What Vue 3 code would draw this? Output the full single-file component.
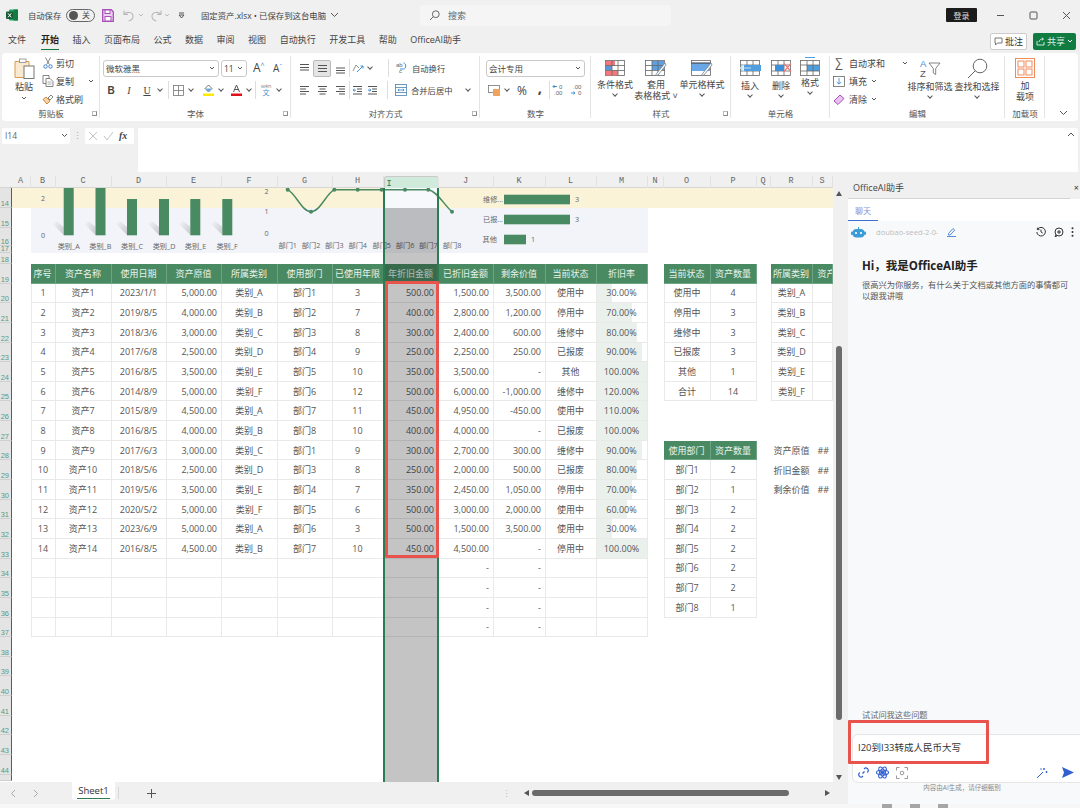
<script setup>
const colNames = ['A','B','C','D','E','F','G','H','I','J','K','L','M','N','O','P','Q','R','S']
const colW = [19,25,56,55,55,56,55,51,55,55,52,51,51,16,47,46,14,42,20]
const gridCols = '11.5px ' + colW.map(w => w + 'px').join(' ')
const rowSizes = [20,20,18,7,11]
for (let i = 19; i <= 44; i++) rowSizes.push(19.65)
rowSizes.push(6)
const gridRows = rowSizes.map(h => h + 'px').join(' ')

const rowLabels = []
for (let r = 14; r <= 45; r++) rowLabels.push(r)

const colOf = n => colNames.indexOf(n) + 2
const rowOf = r => r - 13

const heads = ['序号','资产名称','使用日期','资产原值','所属类别','使用部门','已使用年限','年折旧金额','已折旧金额','剩余价值','当前状态','折旧率']
const rows = [
  ['1','资产1','2023/1/1','5,000.00','类别_A','部门1','3','500.00','1,500.00','3,500.00','使用中',30],
  ['2','资产2','2019/8/5','4,000.00','类别_B','部门2','7','400.00','2,800.00','1,200.00','停用中',70],
  ['3','资产3','2018/3/6','3,000.00','类别_C','部门3','8','300.00','2,400.00','600.00','维修中',80],
  ['4','资产4','2017/6/8','2,500.00','类别_D','部门4','9','250.00','2,250.00','250.00','已报废',90],
  ['5','资产5','2016/8/5','3,500.00','类别_E','部门5','10','350.00','3,500.00','-','其他',100],
  ['6','资产6','2014/8/9','5,000.00','类别_F','部门6','12','500.00','6,000.00','-1,000.00','维修中',120],
  ['7','资产7','2015/8/9','4,500.00','类别_A','部门7','11','450.00','4,950.00','-450.00','使用中',110],
  ['8','资产8','2016/8/5','4,000.00','类别_B','部门8','10','400.00','4,000.00','-','已报废',100],
  ['9','资产9','2017/6/3','3,000.00','类别_C','部门1','9','300.00','2,700.00','300.00','维修中',90],
  ['10','资产10','2018/5/6','2,500.00','类别_D','部门3','8','250.00','2,000.00','500.00','已报废',80],
  ['11','资产11','2019/5/6','3,500.00','类别_E','部门4','7','350.00','2,450.00','1,050.00','停用中',70],
  ['12','资产12','2020/5/2','5,000.00','类别_F','部门5','6','500.00','3,000.00','2,000.00','使用中',60],
  ['13','资产13','2023/6/9','5,000.00','类别_A','部门6','3','500.00','1,500.00','3,500.00','使用中',30],
  ['14','资产14','2016/8/5','4,500.00','类别_B','部门7','10','450.00','4,500.00','-','停用中',100]
]
const rightCols = new Set([3,7,8,9])
const cells = []
const put = (col, row, text, cls = '', bg = '') => cells.push({ col, row, text, cls, bg })

heads.forEach((h, i) => put(i + 3, rowOf(19), h, 'hd' + (i === 0 ? ' first' : '')))
rows.forEach((r, ri) => {
  r.forEach((v, i) => {
    const isRate = i === 11
    put(i + 3, rowOf(20 + ri), isRate ? v.toFixed(2) + '%' : v,
      (rightCols.has(i) ? 'rt' : '') + (i === 0 ? ' first' : '') + (isRate ? ' bar' : ''),
      isRate ? Math.min(v, 100) + '% 100%' : '')
  })
})
for (let r = 34; r <= 37; r++) {
  for (let i = 0; i < 12; i++) {
    const dash = i === 8 || i === 9
    put(i + 3, rowOf(r), dash ? '-' : '', (rightCols.has(i) ? 'rt' : '') + (i === 0 ? ' first' : ''))
  }
}
const pair = (c1, c2, startRow, head, list) => {
  put(c1, startRow, head[0], 'hd first')
  put(c2, startRow, head[1], c2 === colOf('S') ? 'hd lft' : 'hd')
  list.forEach((p, i) => {
    put(c1, startRow + 1 + i, p[0], 'first')
    put(c2, startRow + 1 + i, p[1])
  })
}
pair(colOf('O'), colOf('P'), rowOf(19), ['当前状态','资产数量'], [['使用中',4],['停用中',3],['维修中',3],['已报废',3],['其他',1],['合计',14]])
pair(colOf('R'), colOf('S'), rowOf(19), ['所属类别','资产数量'], [['类别_A',''],['类别_B',''],['类别_C',''],['类别_D',''],['类别_E',''],['类别_F','']])
pair(colOf('O'), colOf('P'), rowOf(28), ['使用部门','资产数量'], [['部门1',2],['部门2',1],['部门3',2],['部门4',2],['部门5',2],['部门6',2],['部门7',2],['部门8',1]])
;['资产原值','折旧金额','剩余价值'].forEach((t, i) => {
  put(colOf('R'), rowOf(28 + i), t, 'plain')
  put(colOf('S'), rowOf(28 + i), '##', 'plain lft')
})

const cellStyle = c => {
  const s = { gridColumn: c.col, gridRow: c.row }
  if (c.bg) s.backgroundSize = c.bg
  return s
}
const barItems = [
  { x: 63.7, t: -8 }, { x: 95.5, t: -8 }, { x: 127, t: 11 }, { x: 159, t: 11 }, { x: 190.3, t: 11 }, { x: 222.3, t: 11 }
]
const barLabels = [['类别_A',68.7],['类别_B',100.3],['类别_C',132],['类别_D',164],['类别_E',195.5],['类别_F',227]]
const linePts = [[287.7,1.7],[311,23.7],[334.3,1.7],[357.7,1.7],[381.7,1.7],[405,1.7],[428.3,1.7],[452,23.7]]
const tabs = ['开始','插入','页面布局','公式','数据','审阅','视图','自动执行','开发工具','帮助','OfficeAI助手']
</script>

<template>
  <div class="app">
    <!-- title bar -->
    <header class="titlebar">
      <div class="tl">
        <svg class="logo" width="12" height="12" viewBox="0 0 12 12"><rect x="3" y="0.5" width="9" height="11" rx="1" fill="#21a366"/><rect x="7.5" y="0.5" width="4.5" height="11" fill="#107c41"/><rect x="0" y="2.5" width="7.5" height="7.5" rx="1" fill="#185c37"/><path d="M2 4.3l3.3 4M5.3 4.3L2 8.3" stroke="#fff" stroke-width="1"/></svg>
        <span class="as">自动保存</span>
        <span class="toggle"><i class="knob"></i><b>关</b></span>
        <svg class="save" width="12" height="13" viewBox="0 0 12 13"><path d="M.7.7h8.6l2 2v9.6H.7z" fill="#ecd4f0" stroke="#a84fb8" stroke-width="1.3"/><rect x="3" y="1" width="5" height="3.5" fill="#fff" stroke="#a84fb8"/><rect x="3" y="7.5" width="6" height="4.5" fill="#fff" stroke="#a84fb8"/></svg>
        <svg class="undo" width="11" height="13" viewBox="0 0 11 13" fill="none" stroke="#b8b8b8" stroke-width="1.1"><path d="M1 1.5v4h4"/><path d="M1.2 5.3C3.5 2.4 9.8 2.8 10 7c.1 2.6-2 4.4-4.3 5"/></svg>
        <svg class="cv1" width="6" height="4" viewBox="0 0 6 4"><path d="M1 1l2 2 2-2" fill="none" stroke="#bbb"/></svg>
        <svg class="redo" width="12" height="13" viewBox="0 0 12 13" fill="none" stroke="#b8b8b8" stroke-width="1.1"><path d="M11 1.5v4H7"/><path d="M10.8 5.3C8.5 2.4 2.2 2.8 2 7c-.1 2.6 2 4.4 4.3 5"/></svg>
        <svg class="cv2" width="6" height="4" viewBox="0 0 6 4"><path d="M1 1l2 2 2-2" fill="none" stroke="#bbb"/></svg>
        <svg class="cust" width="7" height="7" viewBox="0 0 7 7"><path d="M1 1h5" stroke="#555"/><path d="M1 3l2.5 3L6 3z" fill="none" stroke="#555"/></svg>
        <span class="fname">固定资产.xlsx • 已保存到这台电脑</span>
        <svg class="cv3" width="9" height="6" viewBox="0 0 9 6"><path d="M1 1l3.5 3.5L8 1" fill="none" stroke="#555"/></svg>
      </div>
      <div class="search">
        <svg width="11" height="11" viewBox="0 0 11 11" fill="none" stroke="#666"><circle cx="6.8" cy="4.2" r="3.4"/><path d="M4.4 6.6L1 10"/></svg>
        <span>搜索</span>
      </div>
      <div class="grow"></div>
      <span class="login">登录</span>
      <span class="winbtn"><svg width="9" height="9" viewBox="0 0 9 9"><path d="M1 4.5h7" stroke="#555"/></svg></span>
      <span class="winbtn"><svg width="9" height="9" viewBox="0 0 9 9"><rect x="1" y="1" width="7" height="7" rx="1" fill="none" stroke="#555"/></svg></span>
      <span class="winbtn"><svg width="9" height="9" viewBox="0 0 9 9"><path d="M1 1l7 7M8 1L1 8" stroke="#555"/></svg></span>
    </header>

    <!-- tabs -->
    <nav class="tabs">
      <span class="tab first-tab">文件</span>
      <span v-for="t in tabs" :key="t" class="tab" :class="{ active: t === '开始' }">{{ t }}</span>
      <div class="grow"></div>
      <span class="note"><svg width="9" height="9" viewBox="0 0 9 9"><path d="M1 1h7v5H3.5L1.5 8V6H1z" fill="none" stroke="#555" stroke-width=".8"/></svg>批注</span>
      <span class="share"><svg width="9" height="9" viewBox="0 0 9 9" fill="none" stroke="#fff" stroke-width=".8"><path d="M1 4v4h7V5"/><path d="M3 5c0-2 2-3 4-3M5.8.8L7.5 2 5.8 3.4"/></svg>共享<svg width="6" height="4" viewBox="0 0 6 4"><path d="M1 1l2 2 2-2" fill="none" stroke="#fff"/></svg></span>
    </nav>

    <!-- ribbon -->
    <section class="ribbon">
      <div class="grp g1">
        <div class="body row">
          <div class="paste">
            <svg width="21" height="21" viewBox="0 0 21 21"><path d="M1 3.5h4l1-2h5l1 2h3v16H1z" fill="#f9e9d0" stroke="#d89a50"/><rect x="5.5" y="1" width="6.5" height="3.5" fill="#fff" stroke="#8a8a8a" stroke-width=".8"/><rect x="10" y="8" width="10" height="12.5" fill="#fff" stroke="#777"/></svg>
            <span class="lbl">粘贴</span>
            <svg class="cv" width="6" height="4" viewBox="0 0 6 4"><path d="M1 1l2 2 2-2" fill="none" stroke="#555"/></svg>
          </div>
          <div class="list">
            <div class="li"><svg class="m1ic" width="10" height="12" viewBox="0 0 10 12" fill="none" stroke="#3f7fc4"><path d="M2.5 0.5L6.3 7.5M7.5 0.5L3.7 7.5" stroke="#666" stroke-width=".8"/><circle cx="2.5" cy="9.5" r="1.7"/><circle cx="7.5" cy="9.5" r="1.7"/></svg><span>剪切</span></div>
            <div class="li"><svg width="12" height="12" viewBox="0 0 11 12" fill="#fff" stroke="#666" stroke-width=".8"><path d="M.5.5h6v8h-6z"/><path d="M3.5 3.5h4l3 3v5h-7z"/><path d="M5 7h4M5 9h4" stroke="#999"/></svg><span>复制</span><svg class="cv cpy" width="6" height="4" viewBox="0 0 6 4"><path d="M1 1l2 2 2-2" fill="none" stroke="#555"/></svg></div>
            <div class="li"><svg width="12" height="12" viewBox="0 0 12 12"><path d="M1 6.5l4 4.5 3-3-4-4z" fill="#f6d6a8" stroke="#d8853c"/><path d="M6 5l3-3 2 2-3 3z" fill="#fff" stroke="#666" stroke-width=".8"/></svg><span>格式刷</span></div>
          </div>
        </div>
        <div class="glabel">剪贴板<i class="launch"></i></div>
      </div>

      <div class="grp g2">
        <div class="body col">
          <div class="frow r1">
            <span class="sel w116"><span>微软雅黑</span><svg width="6" height="4" viewBox="0 0 6 4"><path d="M1 1l2 2 2-2" fill="none" stroke="#555"/></svg></span>
            <span class="sel w26"><span>11</span><svg width="6" height="4" viewBox="0 0 6 4"><path d="M1 1l2 2 2-2" fill="none" stroke="#555"/></svg></span>
            <span class="a-big">A<sup>^</sup></span>
            <span class="a-small">A<sup>ˇ</sup></span>
          </div>
          <div class="frow r2 f2">
            <b class="ic18 ser">B</b><i class="ic18 ser">I</i><u class="ic18 ser">U</u><span class="cvb"></span>
            <span class="sep m1"></span>
            <span class="ic18"><svg width="11" height="11" viewBox="0 0 11 11" fill="none" stroke="#777" stroke-width=".8"><rect x=".5" y=".5" width="10" height="10"/><path d="M5.5.5v10M.5 5.5h10"/></svg></span><span class="cvb"></span>
            <span class="ic18 ml4"><svg width="11" height="12" viewBox="0 0 11 12"><path d="M5.5 1L9 4.5 5.5 8 2 4.5z" fill="#fff" stroke="#555" stroke-width=".8"/><path d="M2 4.5h7L5.5 8z" fill="#6ea9dc"/><rect y="9.5" width="11" height="2.5" fill="#ffeb00"/></svg></span><span class="cvb"></span>
            <span class="ic18 ml2"><svg width="11" height="12" viewBox="0 0 11 12"><path d="M2.5 8L5.5 1l3 7M3.7 5.5h3.6" fill="none" stroke="#555"/><rect y="9.5" width="11" height="2.5" fill="#e0101a"/></svg></span><span class="cvb"></span>
            <span class="sep m2"></span>
            <span class="ic18 wen"><small>wén</small><em>文</em></span><span class="cvb"></span>
          </div>
        </div>
        <div class="glabel">字体<i class="launch"></i></div>
      </div>

      <div class="grp g3">
        <div class="body col">
          <div class="frow r1 rw">
            <span class="ic18"><svg width="11" height="11" viewBox="0 0 11 11" stroke="#555"><path d="M1 1.5h9M1 4.5h9M1 7h9"/></svg></span>
            <span class="ic18 on"><svg width="11" height="11" viewBox="0 0 11 11" stroke="#555"><path d="M1 2.5h9M1 5.5h9M1 8.5h9"/></svg></span>
            <span class="ic18"><svg width="11" height="11" viewBox="0 0 11 11" stroke="#555"><path d="M1 5h9M1 7.5h9M1 10h9"/></svg></span>
            <span class="sep"></span>
            <span class="ic16"><svg width="12" height="11" viewBox="0 0 12 11" fill="none"><path d="M1 8l3-6 3 3" stroke="#777" stroke-width=".8"/><path d="M5 9l6-6M8.5 3H11v2.5" stroke="#3f8fd0"/></svg></span><span class="cvb"></span>
            <span class="sep m3"></span>
            <span class="wrapico"><svg width="11" height="12" viewBox="0 0 11 12"><text x="0" y="5" class="tinyt">ab</text><text x="3" y="11" class="tinyt">c</text><path d="M7.5 1c3 0 3 6 0 6H4" fill="none" stroke="#3f8fd0"/></svg></span><span class="wtxt">自动换行</span>
          </div>
          <div class="frow r2 rw">
            <span class="ic18"><svg width="11" height="11" viewBox="0 0 11 11" stroke="#555"><path d="M1 1.5h9M1 4h6M1 6.5h9M1 9h6"/></svg></span>
            <span class="ic18"><svg width="11" height="11" viewBox="0 0 11 11" stroke="#555"><path d="M1 1.5h9M2.5 4h6M1 6.5h9M2.5 9h6"/></svg></span>
            <span class="ic18"><svg width="11" height="11" viewBox="0 0 11 11" stroke="#555"><path d="M1 1.5h9M4 4h6M1 6.5h9M4 9h6"/></svg></span>
            <span class="sep"></span>
            <span class="ic15"><svg width="11" height="11" viewBox="0 0 11 11" stroke="#555"><path d="M1 1.5h9M5 4h5M5 6.5h5M1 9h9"/><path d="M4 5.2H1M2.5 3.8L1 5.2l1.5 1.4" stroke="#3f8fd0" fill="none"/></svg></span>
            <span class="ic15"><svg width="11" height="11" viewBox="0 0 11 11" stroke="#555"><path d="M1 1.5h9M5 4h5M5 6.5h5M1 9h9"/><path d="M1 5.2h3M2.5 3.8L4 5.2 2.5 6.6" stroke="#3f8fd0" fill="none"/></svg></span>
            <span class="sep m4"></span>
            <span class="wrapico"><svg width="12" height="12" viewBox="0 0 12 12" fill="#fff" stroke="#4a7fb0" stroke-width=".8"><rect x=".5" y=".5" width="11" height="11"/><path d="M.5 3.5h11M.5 8.5h11"/><path d="M3 6h6M4 4.8L3 6l1 1.2M8 4.8L9 6 8 7.2" stroke="#2f7fc8"/></svg></span><span class="wtxt">合并后居中</span><span class="cvb mc"></span>
          </div>
        </div>
        <div class="glabel">对齐方式<i class="launch"></i></div>
      </div>

      <div class="grp g4">
        <div class="body col">
          <div class="frow r1 pl6"><span class="sel w99"><span>会计专用</span><svg width="6" height="4" viewBox="0 0 6 4"><path d="M1 1l2 2 2-2" fill="none" stroke="#555"/></svg></span></div>
          <div class="frow r2 pl5">
            <span class="ic18"><svg width="12" height="11" viewBox="0 0 12 11"><rect x=".5" y=".5" width="11" height="7" fill="#fff" stroke="#777" stroke-width=".8"/><rect x="5" y="4" width="7" height="7" fill="#f0a35e"/></svg></span><span class="cvb"></span>
            <span class="ic18 ml2 pct">%</span><span class="ic18 comma">,</span>
            <span class="sep"></span>
            <span class="dec"><svg width="14" height="12" viewBox="0 0 14 12"><path d="M5 2.5H1M2.5 1L1 2.5 2.5 4" stroke="#3f8fd0" fill="none"/><text x="7" y="5" class="tinyt">0</text><text x="2" y="11" class="tinyt">.00</text></svg></span>
            <span class="dec"><svg width="14" height="12" viewBox="0 0 14 12"><text x="3" y="5" class="tinyt">.00</text><path d="M1 9h4M3.5 7.5L5 9 3.5 10.5" stroke="#3f8fd0" fill="none"/><text x="8" y="11" class="tinyt">0</text></svg></span>
          </div>
        </div>
        <div class="glabel">数字</div>
      </div>

      <div class="grp g5">
        <div class="body row">
          <div class="big w48">
            <svg width="20" height="16" viewBox="0 0 20 16"><rect x=".5" y=".5" width="19" height="15" fill="#fff" stroke="#666" stroke-width=".8"/><rect x="1" y="1" width="9" height="5" fill="#f4777b"/><rect x="1" y="6" width="6" height="4" fill="#5d97d8"/><rect x="1" y="10.5" width="12" height="5" fill="#f4777b"/><path d="M7 .5v15M13 .5v15M.5 5.5h19M.5 10.5h19" stroke="#666" stroke-width=".8" fill="none"/></svg>
            <span class="l1 fst">条件格式</span><span class="cvb2"></span>
          </div>
          <div class="big w34">
            <svg width="22" height="16" viewBox="0 0 22 16"><rect x=".5" y=".5" width="19" height="15" fill="#fff" stroke="#666" stroke-width=".8"/><path d="M7 1h12v9H7z" fill="#5d9fe0"/><path d="M7 .5v15M13 .5v15M.5 5.5h19M.5 10.5h19" stroke="#666" stroke-width=".8" fill="none"/><path d="M20 3L12 13l-2 3 3-1 8-10z" fill="#fff" stroke="#6d7f8f" stroke-width=".8"/></svg>
            <span class="l1 fst">套用</span><span class="l1">表格格式 ˅</span>
          </div>
          <div class="big w58">
            <svg width="22" height="16" viewBox="0 0 22 16"><rect x=".5" y=".5" width="19" height="15" fill="#fff" stroke="#666" stroke-width=".8"/><rect x="1" y="3" width="18" height="8" fill="#6aa7e6"/><path d="M.5 3h19" stroke="#333"/><path d="M20 3L12 13l-2 3 3-1 8-10z" fill="#fff" stroke="#6d7f8f" stroke-width=".8"/></svg>
            <span class="l1 fst">单元格样式</span><span class="cvb2"></span>
          </div>
        </div>
        <div class="glabel">样式<i class="launch"></i></div>
      </div>

      <div class="grp g6">
        <div class="body row">
          <div class="big w38">
            <svg width="22" height="16" viewBox="0 0 22 16"><rect x="1.5" y=".5" width="19" height="15" fill="#fff" stroke="#666" stroke-width=".8"/><path d="M8 .5v15M14 .5v15M1.5 5h19M1.5 11h19" stroke="#666" stroke-width=".8"/><rect x="5" y="5" width="17" height="6" fill="#4f9fe0"/><path d="M12 8H2M5 4.5L1.5 8 5 11.5" fill="none" stroke="#bfe0f8" stroke-width="1.2"/></svg>
            <span class="l1 lo">插入</span><span class="cvb2"></span>
          </div>
          <div class="big w24">
            <svg width="21" height="16" viewBox="0 0 21 16"><rect x=".5" y=".5" width="19" height="15" fill="#fff" stroke="#666" stroke-width=".8"/><path d="M7 .5v15M13 .5v15M.5 5h19M.5 11h19" stroke="#666" stroke-width=".8"/><rect x="4" y="5" width="9" height="6" fill="#3f8fd8"/><path d="M13 3.5l7 8M20 3.5l-7 8" stroke="#ef7a7c" stroke-width="1.2"/></svg>
            <span class="l1 lo">删除</span><span class="cvb2"></span>
          </div>
          <div class="big w34">
            <svg width="20" height="19" viewBox="0 0 20 19" class="up"><path d="M5 .5h10" stroke="#4f9fe0"/><rect x=".5" y="3.5" width="19" height="15" fill="#fff" stroke="#666" stroke-width=".8"/><rect x="7" y="8" width="12" height="6" fill="#4f9fe0"/><path d="M7 3.5v15M13 3.5v15M.5 8h19M.5 14h19" stroke="#666" stroke-width=".8" fill="none"/></svg>
            <span class="l1 lo">格式</span><span class="cvb2"></span>
          </div>
        </div>
        <div class="glabel">单元格</div>
      </div>

      <div class="grp g7">
        <div class="body row">
          <div class="list w80">
            <div class="li"><span class="sig">∑</span><span>自动求和</span><svg class="cv cpy2" width="6" height="4" viewBox="0 0 6 4"><path d="M1 1l2 2 2-2" fill="none" stroke="#555"/></svg></div>
            <div class="li"><svg width="12" height="11" viewBox="0 0 12 11" fill="#fff" stroke="#666" stroke-width=".8"><rect x=".5" y=".5" width="11" height="10"/><path d="M6 2v6M3.8 6L6 8.2 8.2 6" stroke="#2f7fc8" fill="none"/></svg><span>填充</span><svg width="6" height="4" viewBox="0 0 6 4"><path d="M1 1l2 2 2-2" fill="none" stroke="#555"/></svg></div>
            <div class="li"><svg width="12" height="11" viewBox="0 0 12 11"><path d="M1 7l6-6 4 3.5-6 6z" fill="#e9c3ef" stroke="#a84fb8"/></svg><span>清除</span><svg width="6" height="4" viewBox="0 0 6 4"><path d="M1 1l2 2 2-2" fill="none" stroke="#555"/></svg></div>
          </div>
          <div class="big w40">
            <svg class="up2" width="22" height="21" viewBox="0 0 22 21"><text x="1" y="9" class="azA">A</text><text x="1" y="19" class="azZ">Z</text><path d="M10 5h11l-4.3 5.5v6l-2.4-1.5v-4.5z" fill="#fff" stroke="#666" stroke-width=".8"/></svg>
            <span class="l1 l3">排序和筛选</span><span class="cvb2"></span>
          </div>
          <div class="big w54">
            <svg class="up2" width="21" height="21" viewBox="0 0 21 21" fill="none" stroke="#666"><circle cx="13" cy="8" r="6.8"/><path d="M8 13l-7 7"/></svg>
            <span class="l1 l3">查找和选择</span><span class="cvb2"></span>
          </div>
        </div>
        <div class="glabel">编辑</div>
      </div>

      <div class="grp g8">
        <div class="body row">
          <div class="big w40">
            <svg class="up2" width="20" height="20" viewBox="0 0 20 20" fill="none" stroke="#f08a5c"><rect x=".5" y=".5" width="19" height="19"/><rect x="3" y="3" width="6" height="6"/><rect x="11" y="3" width="6" height="6"/><rect x="3" y="11" width="6" height="6"/><rect x="11" y="11" width="6" height="6"/></svg>
            <span class="l1 l3">加</span><span class="l1">载项</span>
          </div>
        </div>
        <div class="glabel">加载项</div>
      </div>
      <div class="collapse"><svg width="9" height="6" viewBox="0 0 9 6"><path d="M1 1l3.5 3.5L8 1" fill="none" stroke="#555"/></svg></div>
    </section>

    <!-- formula bar -->
    <section class="formula">
      <div class="namebox"><span>I14</span><svg width="7" height="5" viewBox="0 0 7 5"><path d="M1 1l2.500 2.500L6 1" fill="none" stroke="#555"/></svg></div>
      <span class="vdots">⋮</span>
      <div class="fxbox">
        <svg width="10" height="10" viewBox="0 0 10 10"><path d="M1 1l8 8M9 1L1 9" stroke="#c4c4c4"/></svg>
        <svg width="11" height="10" viewBox="0 0 11 10"><path d="M1 5l3 4 6-8" fill="none" stroke="#c4c4c4"/></svg>
        <span class="fx">fx</span>
      </div>
      <div class="finput"><svg width="8" height="5" viewBox="0 0 8 5"><path d="M1 4l3-3 3 3" fill="none" stroke="#555"/></svg></div>
    </section>

    <!-- workspace -->
    <div class="work">
      <div class="left">
        <div class="colhead" :style="{ gridTemplateColumns: gridCols }">
          <span class="corner"><i></i></span>
          <span v-for="n in colNames" :key="n" class="ch" :class="{ sel: n === 'I' }">{{ n }}</span>
        </div>
        <div class="mid">
          <div class="sheet">
            <div class="grid" :style="{ gridTemplateColumns: gridCols, gridTemplateRows: gridRows }">
              <span v-for="r in rowLabels" :key="r" class="rh" :style="{ gridRow: r - 13 }">{{ r < 45 ? r : '' }}</span>
              <div class="band"></div>
              <div class="band-i"></div>
              <div class="chartbg"></div>
              <div v-for="(c, i) in cells" :key="i" class="cell" :class="c.cls" :style="cellStyle(c)">{{ c.text }}</div>
            </div>

            <svg class="charts" width="832" height="76" viewBox="0 0 832 76">
              <defs>
                <linearGradient id="shd" x1="1" y1="1" x2="0" y2="0"><stop offset="0" stop-color="#c6cacd"/><stop offset="1" stop-color="#c6cacd" stop-opacity="0"/></linearGradient>
              </defs>
              <text x="43" y="13" class="ax" text-anchor="middle">2</text>
              <text x="43" y="50" class="ax" text-anchor="middle">0</text>
              <g v-for="b in barItems" :key="b.x">
                <path :d="`M${b.x} 47L${b.x - 11} 36L${b.x - 7} 33L${b.x} 39z`" fill="url(#shd)"/>
                <rect :x="b.x" :y="b.t" width="10" :height="47.3 - b.t" fill="#4a8a62"/>
              </g>
              <text v-for="l in barLabels" :key="l[0]" :x="l[1]" y="61" class="ax" text-anchor="middle">{{ l[0] }}</text>
              <text x="266.5" y="6" class="ax" text-anchor="middle">2</text>
              <text x="266.5" y="26" class="ax" text-anchor="middle">1</text>
              <text x="266.5" y="48" class="ax" text-anchor="middle">0</text>
              <path d="M287.7 1.7C296 6 302 23.7 311 23.7S326 6 334.3 1.7L357.7 1.7 381.7 1.7 405 1.7 428.3 1.7C437 3 444 17 452 23.7" fill="none" stroke="#4a8a62" stroke-width="1.5"/>
              <circle v-for="p in linePts" :key="p[0]" :cx="p[0]" :cy="p[1]" r="2" fill="#4a8a62"/>
              <text v-for="(p, i) in linePts" :key="'d' + i" :x="p[0]" y="60" class="ax" text-anchor="middle">部门{{ i + 1 }}</text>
              <text x="503" y="14" class="ax" text-anchor="end">维修...</text>
              <rect x="504" y="6.7" width="66" height="9.6" fill="#4a8a62"/>
              <text x="577" y="14" class="ax" text-anchor="middle">3</text>
              <text x="503" y="34" class="ax" text-anchor="end">已报...</text>
              <rect x="504" y="26.7" width="66" height="9.6" fill="#4a8a62"/>
              <text x="577" y="34" class="ax" text-anchor="middle">3</text>
              <text x="497" y="54" class="ax" text-anchor="end">其他</text>
              <rect x="504" y="46.7" width="22" height="9.6" fill="#4a8a62"/>
              <text x="533" y="54" class="ax" text-anchor="middle">1</text>
            </svg>

            <div class="selcol"></div>
            <div class="redbox"></div>
          </div>
          <div class="vscroll">
            <i class="arr-up"></i>
            <div class="vtrack"><i class="vthumb"></i></div>
            <i class="arr-down"></i>
          </div>
        </div>
        <div class="sheetbar">
          <svg class="nav1" width="6" height="9" viewBox="0 0 6 9"><path d="M5 1L1.5 4.5 5 8" fill="none" stroke="#aaa"/></svg>
          <svg class="nav2" width="6" height="9" viewBox="0 0 6 9"><path d="M1 1l3.5 3.5L1 8" fill="none" stroke="#aaa"/></svg>
          <span class="stab">Sheet1</span>
          <i class="stabsep"></i>
          <svg class="plus" width="9" height="9" viewBox="0 0 9 9"><path d="M4.5 0v9M0 4.5h9" stroke="#555"/></svg>
          <div class="grow"></div>
          <span class="hdots">⋮</span>
          <i class="arr-left"></i>
          <i class="hthumb"></i>
          <i class="arr-right"></i>
        </div>
      </div>

      <aside class="panel">
        <div class="phead"><span>OfficeAI助手</span><b>×</b></div>
        <div class="ptabs"><span>聊天</span></div>
        <div class="pbody">
          <div class="ptools">
            <svg width="15" height="11" viewBox="0 0 15 11"><path d="M7.5 0v2" stroke="#3a9bd9"/><rect x="1.5" y="2" width="12" height="8.5" rx="4" fill="#3a9bd9"/><rect x="0" y="4.5" width="2" height="3.5" rx="1" fill="#3a9bd9"/><rect x="13" y="4.5" width="2" height="3.5" rx="1" fill="#3a9bd9"/><circle cx="5" cy="6" r="1.1" fill="#fff"/><circle cx="10" cy="6" r="1.1" fill="#fff"/></svg>
            <span class="model">doubao-seed-2-0-l</span>
            <svg class="edit" width="9" height="10" viewBox="0 0 9 10" fill="none" stroke="#3f7fd6" stroke-width=".9"><path d="M1.5 6.5L6 1.5l1.7 1.5L3.2 8H1.5z"/><path d="M0 9.5h9"/></svg>
            <div class="grow"></div>
            <svg width="10" height="10" viewBox="0 0 10 10" fill="none" stroke="#333"><path d="M1.6 2.2A4.3 4.3 0 1 1 .8 5"/><path d="M1.4.6v2h2M5 2.6V5l1.7 1"/></svg>
            <svg class="pl" width="10" height="10" viewBox="0 0 10 10" fill="none" stroke="#333"><circle cx="5" cy="5" r="4"/><path d="M5 3v4M3 5h4"/><path d="M2 8L1 9.6l2-.6"/></svg>
            <svg class="dts" width="3" height="10" viewBox="0 0 3 10" fill="#333"><circle cx="1.5" cy="1.2" r="1"/><circle cx="1.5" cy="5" r="1"/><circle cx="1.5" cy="8.8" r="1"/></svg>
          </div>
          <h2 class="hi">Hi，我是OfficeAI助手</h2>
          <p class="desc">很高兴为你服务，有什么关于文档或其他方面的事情都可以跟我讲哦</p>
          <div class="grow"></div>
          <div class="try">试试问我这些问题</div>
          <div class="inputbox">
            <div class="itext">I20到I33转成人民币大写</div>
            <div class="iicons">
              <svg width="13" height="13" viewBox="0 0 13 13" fill="none" stroke="#2f5fd0" stroke-width="1.2"><path d="M5.5 7.5l2-2"/><path d="M7 3l1-1a2.6 2.6 0 0 1 3.2 3.2l-1 1.3"/><path d="M6 10l-1 1a2.6 2.6 0 0 1-3.2-3.2l1-1.3"/></svg>
              <svg class="ii2" width="13" height="13" viewBox="0 0 13 13" fill="none" stroke="#2f5fd0" stroke-width="1.1"><ellipse cx="6.5" cy="6.5" rx="6" ry="2.5"/><ellipse cx="6.5" cy="6.5" rx="6" ry="2.5" transform="rotate(60 6.5 6.5)"/><ellipse cx="6.5" cy="6.5" rx="6" ry="2.5" transform="rotate(120 6.5 6.5)"/><circle cx="6.5" cy="6.5" r="1.2" fill="#2f5fd0"/></svg>
              <svg class="ii3" width="12" height="12" viewBox="0 0 12 12" fill="none" stroke="#999"><path d="M.5 3.5v-3h3M8.5.5h3v3M11.5 8.5v3h-3M3.5 11.5h-3v-3"/><circle cx="6" cy="6" r="1.8"/></svg>
              <div class="grow"></div>
              <svg width="12" height="12" viewBox="0 0 12 12" fill="none" stroke="#2f5fd0"><path d="M1 11l6-6"/><path d="M8 1v2M7 2h2M10.5 4v2M9.5 5h2M5 1.5v1M4.5 2h1" stroke-width=".9"/></svg>
              <svg class="ii5" width="12" height="11" viewBox="0 0 12 11"><path d="M0 0l12 5.5-12 5.500 2-5.500z" fill="#2f5fd0"/></svg>
            </div>
          </div>
          <div class="disc">内容由AI生成，请仔细甄别</div>
          <div class="redbox2"></div>
        </div>
      </aside>
    </div>
    <footer class="status"><i></i><i></i><i></i></footer>
  </div>
</template>

<style scoped>
* { box-sizing: border-box; }
.app { width: 1080px; height: 808px; overflow: hidden; background: #f0f0f0; display: flex; flex-direction: column; position: relative; color: #444; font-family: "Open Sans", "Noto Sans CJK SC", "Liberation Sans", sans-serif; font-size: 9px; }
.grow { flex: 1 1 0; }

.titlebar { height: 30px; display: flex; align-items: center; flex: none; }
.tl { width: 420px; display: flex; align-items: center; flex: none; }
.logo { margin-left: 6px; }
.as { margin-left: 10px; font-size: 8.3px; width: 33px; white-space: nowrap; }
.toggle { margin-left: 5px; width: 29px; height: 13px; border: 1px solid #666; border-radius: 7px; display: flex; align-items: center; padding: 0 2px; justify-content: space-between; }
.toggle .knob { width: 9px; height: 9px; border-radius: 50%; background: #555; }
.toggle b { font-weight: 400; font-size: 8px; margin-right: 2px; line-height: 1; }
.save { margin-left: 7px; }
.undo { margin-left: 9px; }
.cv1 { margin-left: 4px; }
.redo { margin-left: 6px; }
.cv2 { margin-left: 2px; }
.cust { margin-left: 8px; }
.fname { margin-left: 16px; font-size: 8.4px; white-space: nowrap; width: 127px; }
.cv3 { margin-left: 2px; }
.search { width: 251px; height: 21px; flex: none; background: #f5f5f5; border-radius: 3px; display: flex; align-items: center; padding-left: 9px; gap: 8px; color: #666; font-size: 9px; }
.login { width: 31px; height: 14px; background: #1c1c1c; color: #ddd; border-radius: 1px; font-size: 8px; display: flex; align-items: center; justify-content: center; margin-right: 7px; }
.winbtn { width: 33px; display: flex; justify-content: center; }
.winbtn:last-of-type { margin-right: -3px; }

.tabs { height: 22.5px; flex: none; display: flex; align-items: center; padding: 0 4px 3px 8px; gap: 13.5px; }
.tab { white-space: nowrap; position: relative; font-size: 9px; color: #444; }
.first-tab { margin-right: 1.5px; }
.tab.active { font-weight: 700; color: #222; }
.tab.active::after { content: ""; position: absolute; left: 0; right: 0; bottom: -4px; height: 1.5px; background: #107c41; }
.note { width: 37px; height: 17px; margin-top: 3px; background: #fff; border: 1px solid #ccc; border-radius: 2px; display: flex; align-items: center; justify-content: center; gap: 2px; color: #333; margin-right: -7.5px; }
.share { width: 43px; height: 17px; margin-top: 3px; background: #107c41; color: #dfeee6; border-radius: 2px; display: flex; align-items: center; justify-content: center; gap: 2px; }

.ribbon { height: 68px; flex: none; margin: 0 2px; background: #fff; border-radius: 4px; display: flex; }
.grp { display: flex; flex-direction: column; position: relative; flex: none; }
.grp::after { content: ""; position: absolute; right: 0; top: 3px; bottom: 3px; width: 1px; background: #e4e4e4; }
.g1 { width: 98px; } .g2 { width: 191px; } .g3 { width: 189px; } .g4 { width: 111px; } .g5 { width: 140px; } .g6 { width: 99px; } .g7 { width: 175px; } .g8 { width: 40px; }
.body { flex: 1 1 0; min-height: 0; }
.row { display: flex; }
.col { display: flex; flex-direction: column; }
.glabel { height: 13px; text-align: center; font-size: 8.5px; line-height: 13px; position: relative; top: -1px; color: #555; }
.launch { position: absolute; right: 3px; top: 4px; width: 5px; height: 5px; border: 1px solid #888; border-top-color: #bbb; border-left-color: #bbb; }

.paste { width: 40px; padding-left: 4px; padding-top: 5px; display: flex; flex-direction: column; align-items: center; flex: none; }
.paste svg:first-child { flex: none; }
.paste .lbl { margin-top: 2px; line-height: 12px; }
.paste .cv { margin-top: 3px; }
.list { padding-top: 1.5px; flex: none; width: 56px; }
.li { height: 18px; display: flex; align-items: center; gap: 2px; white-space: nowrap; }
.li > svg:first-child { flex: none; }
.m1ic { margin: 0 1px; }
.cpy { margin-left: 12px; }
.cpy2 { margin-left: 13px; }
.w80 { width: 80px; padding-left: 3px; }
.w80 .li { gap: 4px; }
.sig { width: 12px; font-size: 12px; line-height: 1; color: #555; text-align: center; }

.frow { display: flex; align-items: center; }
.r1 { height: 17px; margin-top: 7px; }
.r2 { height: 18px; margin-top: 4.5px; }
.g2 .r1 { padding-left: 3px; gap: 2px; }
.f2 { padding-left: 2px; }
.sel { height: 17px; border: 1px solid #c9c9c9; border-radius: 3px; display: flex; align-items: center; justify-content: space-between; padding: 0 3px 0 2px; background: #fff; font-size: 8.5px; flex: none; }
.w116 { width: 116px; } .w26 { width: 26px; } .w99 { width: 99px; }
.a-big { font-size: 12px; margin-left: 4px; width: 18px; color: #444; line-height: 1; }
.a-small { font-size: 10px; width: 16px; color: #444; line-height: 1; }
.a-big sup, .a-small sup { font-size: 7px; color: #3f7fd6; vertical-align: top; line-height: 1; }
.ic18, .ic16, .ic15 { height: 18px; display: inline-flex; align-items: center; justify-content: center; flex: none; }
.ic18 { width: 18px; } .ic16 { width: 16px; } .ic15 { width: 15px; }
.ser { font-family: "Liberation Serif", serif; font-size: 10px; color: #444; }
b.ser { font-family: "Liberation Sans", sans-serif; }
.ic18.on { background: #e4e4e4; border: 1px solid #bbb; border-radius: 2px; height: 17px; }
.cvb, .cvb2 { width: 8px; height: 18px; flex: none; display: inline-flex; align-items: center; justify-content: center; }
.cvb::before, .cvb2::before { content: ""; width: 3px; height: 3px; border-right: 1px solid #555; border-bottom: 1px solid #555; transform: rotate(45deg); margin-top: -2px; }
.sep { width: 1px; height: 18px; background: #ddd; flex: none; }
.m1 { margin: 0 0 0 4px; }
.m2 { margin: 0 1px 0 2px; }
.ml4 { margin-left: 4px; }
.ml2 { margin-left: 2px; }
.rw { padding-left: 4px; }
.m3 { margin-left: 14px; margin-right: 7px; }
.m4 { margin-left: 7px; margin-right: 7px; }
.wrapico { width: 12px; flex: none; display: inline-flex; align-items: center; }
.wtxt { margin-left: 4px; white-space: nowrap; font-size: 8.3px; }
.mc { margin-left: 11px; }
.tinyt { font-size: 6px; fill: #666; font-family: "Liberation Sans", sans-serif; }
.wen { flex-direction: column; line-height: 1; }
.wen small { font-size: 5.5px; color: #888; }
.wen em { font-style: normal; font-size: 7px; color: #4a90d0; }
.pl6 { padding-left: 6px; }
.pl5 { padding-left: 5px; }
.pct { font-size: 12px; }
.comma { font-size: 15px; font-weight: 700; padding-bottom: 6px; }
.dec { width: 18px; flex: none; display: inline-flex; justify-content: center; }

.big { display: flex; flex-direction: column; align-items: center; flex: none; padding-top: 7px; }
.big svg { flex: none; }
.big > svg.up { margin-top: -3px; }
.big > svg.up2 { margin-top: -2px; margin-bottom: -1px; }
.big .l1 { white-space: nowrap; line-height: 11px; }
.big .fst { margin-top: 3px; }
.big .lo { margin-top: 4px; }
.big > svg.up + .lo { margin-top: 1px; }
.big .l3 { margin-top: 3px; }
.big .cvb2 { height: 11px; }
.w48 { width: 48px; } .w34 { width: 34px; } .w58 { width: 58px; } .w38 { width: 38px; } .w24 { width: 24px; } .w40 { width: 40px; } .w54 { width: 54px; }
.azA { font-size: 9.5px; fill: #3f8fd0; font-family: "Liberation Sans", sans-serif; }
.azZ { font-size: 9.5px; fill: #555; font-family: "Liberation Sans", sans-serif; }
.collapse { flex: 1 1 0; display: flex; justify-content: flex-end; align-items: flex-end; padding: 0 10px 5px 0; }

.formula { height: 44px; flex: none; margin: 7.5px 2px 0; display: flex; align-items: flex-start; }
.namebox { width: 68px; height: 15.5px; background: #fff; border-radius: 2px; display: flex; align-items: center; justify-content: space-between; padding: 0 2px 0 3px; font-size: 8.5px; color: #666; flex: none; }
.vdots { width: 15px; text-align: center; color: #aaa; flex: none; line-height: 15px; font-size: 9px; }
.fxbox { width: 49px; height: 15.5px; background: #fff; border-radius: 2px; display: flex; align-items: center; padding: 0 2px 0 3px; gap: 5px; flex: none; }
.fx { font-family: "Liberation Serif", serif; font-style: italic; font-weight: 700; font-size: 10px; color: #444; }
.finput { margin-left: 4px; height: 44px; flex: 1 1 0; background: #fff; border-radius: 2px; display: flex; justify-content: flex-end; padding: 4px 3px 0 0; align-items: flex-start; }

.work { flex: 1 1 0; min-height: 0; margin-top: 4px; display: flex; }
.left { width: 845px; flex: none; display: flex; flex-direction: column; }
.colhead { height: 12px; display: grid; flex: none; background: #f0f0f0; border-bottom: 1px solid #d6d6d6; width: 832.5px; }
.corner { position: relative; }
.corner i { position: absolute; right: 1px; bottom: 1px; border: 3px solid transparent; border-right-color: #ccc; border-bottom-color: #ccc; }
.ch { font-family: "Liberation Mono", monospace; font-size: 8.5px; color: #666; text-align: center; line-height: 11px; border-right: 1px solid #e2e2e2; }
.ch.sel { background: #d0ebdc; color: #2a7350; }
.mid { flex: 1 1 0; min-height: 0; display: flex; }
.sheet { width: 832.5px; position: relative; overflow: hidden; background: #fff; flex: none; }
.grid { display: grid; }
.rh { grid-column: 1; background: #e4e4e4; color: #5d9a7a; font-family: "Liberation Sans", sans-serif; font-size: 7.5px; line-height: 6px; border-right: 1.5px solid #27794f; border-bottom: 1px solid #cfcfcf; display: flex; align-items: flex-end; justify-content: flex-end; padding: 0 1.5px 0 0; overflow: hidden; }
.band { grid-column: 2 / -1; grid-row: 1; background: #fbf3d8; }
.band-i { grid-column: 10; grid-row: 1; background: #f7f8fc; }
.chartbg { grid-column: 3 / 15; grid-row: 2 / 5; background: #f2f4f9; }
.cell { border-right: 1px solid #e9e9e9; border-bottom: 1px solid #e9e9e9; display: flex; align-items: center; justify-content: center; font-size: 9px; color: #555; white-space: nowrap; overflow: hidden; min-width: 0; }
.cell.first { border-left: 1px solid #e9e9e9; }
.cell.rt { justify-content: flex-end; padding-right: 3.5px; }
.cell.hd { background: #4a8a62; color: #e9f2ec; border-right: 1px solid #6fa385; border-bottom: 1px solid #6fa385; border-left: 0; }
.cell.bar { background-image: linear-gradient(#eaf0ec, #eaf0ec); background-repeat: no-repeat; background-position: left top; }
.cell.plain { border: 0; }
.cell.lft { justify-content: flex-start; padding-left: 5px; }
.charts { position: absolute; left: 0; top: 0; overflow: hidden; }
.ax { font-size: 7.2px; fill: #666; font-family: "Open Sans", "Noto Sans CJK SC", sans-serif; }
.selcol { position: absolute; left: 383px; top: 0; bottom: 0; width: 56px; border-left: 2px solid #2a7d53; border-right: 2px solid #2a7d53; background: linear-gradient(transparent 20px, rgba(0, 0, 0, .23) 20px) padding-box; }
.redbox { position: absolute; left: 384.5px; top: 93px; width: 54.5px; height: 277px; border: 3px solid #e8534e; border-radius: 1px; }
.vscroll { width: 12.5px; flex: none; position: relative; display: flex; flex-direction: column; align-items: center; padding: 3px 0 2px; }
.vtrack { flex: 1 1 0; width: 100%; position: relative; }
.vthumb { position: absolute; left: 3.5px; width: 6px; top: 150px; height: 374px; background: #6b6b6b; border-radius: 3px; }
.arr-up { border: 3px solid transparent; border-bottom: 5px solid #555; border-top: 0; }
.arr-down { border: 3px solid transparent; border-top: 5px solid #555; border-bottom: 0; }
.sheetbar { height: 22px; flex: none; display: flex; align-items: center; }
.nav1 { margin-left: 10px; }
.nav2 { margin-left: 17px; }
.stab { margin-left: 33px; width: 43px; height: 18px; align-self: flex-start; background: #fff; border-radius: 0 0 3px 3px; text-align: center; font-size: 9.5px; line-height: 17px; color: #333; position: relative; }
.stab::after { content: ""; position: absolute; left: 5px; right: 5px; bottom: 1px; height: 1.5px; background: #2a7d53; }
.stabsep { width: 1px; height: 12px; background: #d8d8d8; margin-left: 3px; }
.plus { margin-left: 28px; }
.hdots { color: #bbb; margin-right: 13px; font-size: 9px; }
.arr-left { border: 3px solid transparent; border-right: 5px solid #555; border-left: 0; }
.hthumb { width: 257px; height: 6px; border-radius: 3px; background: #6b6b6b; margin-left: 3px; }
.arr-right { border: 3px solid transparent; border-left: 5px solid #555; border-right: 0; margin-left: 36px; margin-right: 15px; }

.panel { flex: 1 1 0; min-width: 0; display: flex; flex-direction: column; padding-left: 3px; }
.phead { height: 23px; flex: none; display: flex; align-items: flex-end; justify-content: space-between; padding: 0 0 6px 5px; font-size: 9px; line-height: 11px; color: #444; position: relative; }
.phead::after { content: ""; position: absolute; left: 0; right: 10px; bottom: 0; height: 1px; background: #d4d4d4; }
.phead b { font-weight: 400; color: #333; margin-right: 1px; font-size: 9px; }
.ptabs { height: 22px; flex: none; background: #fff; position: relative; display: flex; align-items: center; padding-left: 7px; }
.ptabs span { font-size: 8px; color: #7b93dc; }
.ptabs::after { content: ""; position: absolute; left: 0; width: 30px; bottom: 0; height: 1.5px; background: #3f6fd0; }
.pbody { flex: 1 1 0; min-height: 0; background: #f8f9fb; display: flex; flex-direction: column; position: relative; }
.ptools { height: 22px; flex: none; display: flex; align-items: center; padding: 0 6px 0 3px; }
.model { margin-left: 10px; width: 62px; overflow: hidden; white-space: nowrap; font-size: 7.6px; color: #bdbdbd; }
.edit { margin-left: 9px; }
.pl { margin-left: 8px; }
.dts { margin-left: 7px; }
.hi { margin: 15px 0 0 14px; font-size: 11.5px; line-height: 16px; color: #222; font-weight: 700; white-space: nowrap; }
.desc { margin: 5px 0 0 14px; width: 208px; font-size: 8.25px; line-height: 11px; color: #555; }
.try { margin-left: 14px; font-size: 8.2px; line-height: 12px; color: #666; margin-bottom: 13px; }
.inputbox { margin-left: 4px; width: 229px; height: 49px; background: #fff; border: 1px solid #e6e6e6; border-radius: 6px 0 0 6px; flex: none; display: flex; flex-direction: column; }
.itext { padding: 5px 0 0 5px; height: 30px; font-size: 9.5px; line-height: 15px; color: #333; white-space: nowrap; }
.iicons { display: flex; align-items: center; padding: 0 6px 0 4px; height: 15px; }
.ii2 { margin-left: 6px; }
.ii3 { margin-left: 7px; }
.ii5 { margin-left: 14px; }
.disc { height: 21px; flex: none; text-align: center; font-size: 6.5px; line-height: 10px; color: #888; padding-right: 4px; }
.redbox2 { position: absolute; left: 0; bottom: 40px; width: 141px; height: 44px; border: 3px solid #e8534e; border-radius: 1px; }
.status { height: 4px; flex: none; background: #f7f7f7; display: flex; padding-left: 882px; gap: 18px; }
.status i { width: 10px; height: 4px; background: #555; opacity: .5; }
</style>
